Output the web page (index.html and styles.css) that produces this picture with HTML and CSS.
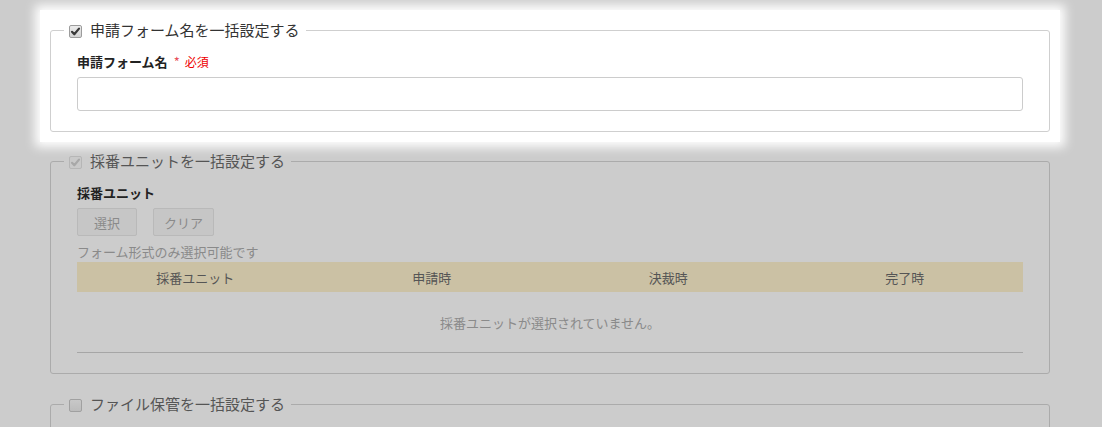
FILE: index.html
```html
<!DOCTYPE html>
<html lang="ja">
<head>
    <meta charset="UTF-8">
    <title>一括設定</title>
    <link rel="stylesheet" href="styles.css">
</head>
<body>
    <div class="section active">
        <fieldset>
            <legend>
                <span class="check checked">
                    <svg viewBox="0 0 13 13" width="13" height="13"><path d="M3 6.8 L5.3 9.3 L10 3.6" fill="none" stroke-width="2.2" stroke-linecap="round" stroke-linejoin="round"/></svg>
                </span>
                <span>申請フォーム名を一括設定する</span>
            </legend>
            <div class="fs-body">
                <label class="field-label">申請フォーム名<span class="req">*</span><span class="req-text">必須</span></label>
                <input type="text" class="text-input">
            </div>
        </fieldset>
    </div>

    <div class="section">
        <fieldset class="dim">
            <legend>
                <span class="check checked disabled">
                    <svg viewBox="0 0 13 13" width="13" height="13"><path d="M3 6.8 L5.3 9.3 L10 3.6" fill="none" stroke-width="2.2" stroke-linecap="round" stroke-linejoin="round"/></svg>
                </span>
                <span>採番ユニットを一括設定する</span>
            </legend>
            <div class="fs-body">
                <label class="field-label">採番ユニット</label>
                <div class="buttons">
                    <button class="btn" disabled>選択</button>
                    <button class="btn" disabled>クリア</button>
                </div>
                <p class="note">フォーム形式のみ選択可能です</p>
                <table class="unit-table">
                    <thead>
                        <tr>
                            <th>採番ユニット</th>
                            <th>申請時</th>
                            <th>決裁時</th>
                            <th>完了時</th>
                        </tr>
                    </thead>
                    <tbody>
                        <tr>
                            <td colspan="4" class="empty">採番ユニットが選択されていません。</td>
                        </tr>
                    </tbody>
                </table>
            </div>
        </fieldset>
    </div>

    <div class="section">
        <fieldset class="dim">
            <legend>
                <span class="check"></span>
                <span>ファイル保管を一括設定する</span>
            </legend>
            <div class="fs-body tall"></div>
        </fieldset>
    </div>
</body>
</html>
```

FILE: styles.css
```css
body {
    margin: 0;
    padding: 10px 0 0 40px;
    background: #cccccc;
    font-family: "Noto Sans CJK JP", "Liberation Sans", sans-serif;
    font-size: 13px;
    color: #333;
}
.section {
    width: 1000px;
    padding: 10px;
}
.section.active {
    background: #fff;
    box-shadow: 0 0 10px 5px #fff;
}
.active + .section {
    padding-top: 9px;
}
fieldset {
    margin: 0;
    padding: 0;
    border: 1px solid #cfcfcf;
    border-radius: 3px;
}
fieldset.dim {
    border-color: #ababab;
}
legend {
    margin-left: 13px;
    padding: 0 6px 0 5px;
    display: flex;
    align-items: center;
    gap: 8px;
    height: 20px;
    line-height: 20px;
    font-size: 15px;
    color: #333;
}
.dim legend {
    color: #555;
}
.check {
    display: inline-block;
    box-sizing: border-box;
    width: 13px;
    height: 13px;
    border: 1px solid #9c9c9c;
    border-radius: 2px;
    background: linear-gradient(#ececec, #d4d4d4);
    position: relative;
    top: 1px;
}
.check svg {
    display: block;
    margin: -1px;
}
.check svg path {
    stroke: #3a3a3a;
}
.check.disabled {
    border-color: #b6b6b6;
    background: #c9c9c9;
}
.check.disabled svg path {
    stroke: #a8a8a8;
}
.dim .check:not(.checked) {
    border-color: #a0a0a0;
    background: linear-gradient(#c8c8c8, #bcbcbc);
}
.fs-body {
    padding: 13px 26px 20px;
}
.fs-body.tall {
    height: 40px;
}
.field-label {
    display: block;
    line-height: 18px;
    font-weight: bold;
    color: #222;
    margin-bottom: 6px;
}
.req {
    margin-left: 6px;
    color: #e8505b;
    font-weight: normal;
}
.req-text {
    margin-left: 5px;
    color: #e00;
    font-weight: normal;
    font-size: 12px;
}
.text-input {
    display: block;
    box-sizing: border-box;
    width: 100%;
    height: 34px;
    margin: 0;
    border: 1px solid #cccccc;
    border-radius: 3px;
    background: #fff;
    font-family: inherit;
}
.buttons {
    display: flex;
    gap: 16px;
}
.btn {
    box-sizing: border-box;
    min-width: 60px;
    height: 28px;
    padding: 0 10px;
    border: 1px solid #b9b9b9;
    border-radius: 2px;
    background: #c6c6c6;
    color: #8a8a8a;
    font-family: inherit;
    font-size: 13px;
}
.note {
    margin: 6px 0 0;
    line-height: 20px;
    color: #8a8a8a;
}
.unit-table {
    width: 100%;
    border-collapse: collapse;
    table-layout: fixed;
}
.unit-table th {
    height: 30px;
    padding: 0;
    background: #cbc1a4;
    font-weight: normal;
    color: #555;
}
.unit-table td.empty {
    height: 60px;
    padding: 0;
    text-align: center;
    color: #8a8a8a;
    border-bottom: 1px solid #a6a6a6;
}
```
